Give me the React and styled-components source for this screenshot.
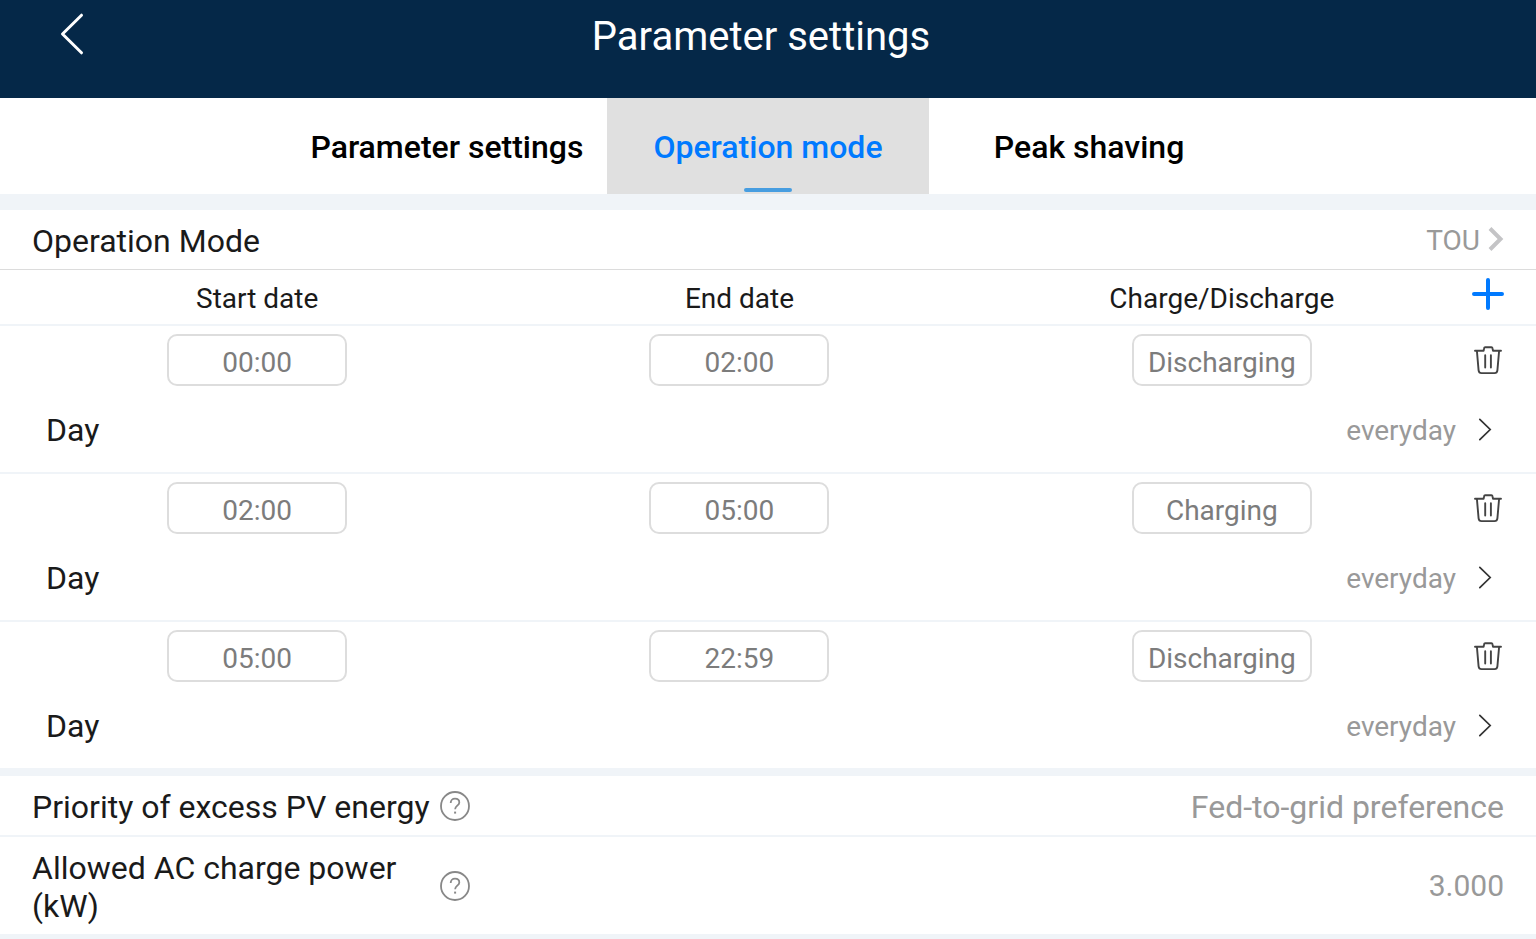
import React, { useState } from "react";
import styled, { createGlobalStyle } from "styled-components";

const TABS = ["Parameter settings", "Operation mode", "Peak shaving"];

const PERIODS = [
  { id: 1, start: "00:00", end: "02:00", mode: "Discharging", day: "everyday" },
  { id: 2, start: "02:00", end: "05:00", mode: "Charging", day: "everyday" },
  { id: 3, start: "05:00", end: "22:59", mode: "Discharging", day: "everyday" },
];

const BackIcon = () => (
  <svg width="32" height="44" viewBox="0 0 32 44" fill="none">
    <path
      d="M25.5 3.2L6.5 22l19 18.8"
      stroke="#fff"
      strokeWidth="3"
      strokeLinecap="round"
      strokeLinejoin="round"
    />
  </svg>
);

const PlusIcon = () => (
  <svg width="32" height="32" viewBox="0 0 32 32" fill="none">
    <path
      d="M16 2v28M2 16h28"
      stroke="#007aff"
      strokeWidth="4"
      strokeLinecap="round"
    />
  </svg>
);

const TrashIcon = () => (
  <svg width="32" height="32" viewBox="0 0 32 32" fill="none">
    <g
      stroke="#444"
      strokeWidth="1.9"
      strokeLinecap="round"
      strokeLinejoin="round"
    >
      <path d="M3 6.7h8.600l.5-2.500c.1-.7.5-1 1.100-1h6.200c.6 0 1 .3 1.100 1l.5 2.500H29" />
      <path d="M4.900 6.900l1.700 19.500c.2 1.800 1.200 2.700 2.900 2.700h13c1.700 0 2.700-.9 2.900-2.700l1.700-19.500" />
      <path d="M13.200 11.200v12.400M18.900 11.200v12.400" />
    </g>
  </svg>
);

const RowArrow = () => (
  <svg width="14" height="24" viewBox="0 0 14 24" fill="none">
    <path
      d="M1.8 1.300L12.200 11.500 1.800 21.700"
      stroke="#333"
      strokeWidth="1.7"
      strokeLinecap="round"
    />
  </svg>
);

const ValueArrow = () => (
  <svg width="16" height="24" viewBox="0 0 16 24" fill="none">
    <path d="M2 1.500L12.500 12 2 22.500" stroke="#c4c4c6" strokeWidth="4" />
  </svg>
);

const HelpIcon = () => (
  <svg width="30" height="30" viewBox="0 0 30 30" fill="none">
    <circle cx="15" cy="15" r="14" stroke="#888" strokeWidth="1.8" />
    <path
      d="M10.700 12c0-2.700 1.800-4.300 4.300-4.300s4.300 1.500 4.300 3.700c0 3.100-4.200 3.500-4.200 6.900"
      stroke="#888"
      strokeWidth="1.8"
    />
    <path d="M14.100 20.600h2v2h-2z" fill="#888" />
  </svg>
);

function Period({ item }) {
  return (
    <PeriodItem>
      <PeriodGrid>
        <TimeInput aria-label="Start date" defaultValue={item.start} />
        <TimeInput aria-label="End date" defaultValue={item.end} />
        <ModeSelect aria-label="Charge/Discharge" defaultValue={item.mode}>
          <option>Charging</option>
          <option>Discharging</option>
        </ModeSelect>
        <IconButton aria-label="Delete">
          <TrashIcon />
        </IconButton>
      </PeriodGrid>
      <DayRow>
        <Label>Day</Label>
        <DayButton>
          {item.day}
          <RowArrow />
        </DayButton>
      </DayRow>
    </PeriodItem>
  );
}

function App() {
  const [tab, setTab] = useState(TABS[1]);

  return (
    <>
      <GlobalStyle />
      <Header>
        <IconButton aria-label="Back">
          <BackIcon />
        </IconButton>
        <Title>Parameter settings</Title>
      </Header>
      <Nav>
        <TabList>
          {TABS.map((name) => (
            <Tab key={name} $active={name === tab} onClick={() => setTab(name)}>
              {name}
            </Tab>
          ))}
        </TabList>
      </Nav>
      <Section>
        <ModeRow>
          <Label>Operation Mode</Label>
          <ModeButton>
            TOU
            <ValueArrow />
          </ModeButton>
        </ModeRow>
        <HeadGrid>
          <span>Start date</span>
          <span>End date</span>
          <span>Charge/Discharge</span>
          <IconButton aria-label="Add">
            <PlusIcon />
          </IconButton>
        </HeadGrid>
        <PeriodList>
          {PERIODS.map((item) => (
            <Period key={item.id} item={item} />
          ))}
        </PeriodList>
      </Section>
      <Section>
        <SettingRow>
          <LabelGroup>
            <Label>Priority of excess PV energy</Label>
            <IconButton aria-label="Help">
              <HelpIcon />
            </IconButton>
          </LabelGroup>
          <ValueButton>Fed-to-grid preference</ValueButton>
        </SettingRow>
        <SettingRow>
          <LabelGroup>
            <Label as="label" htmlFor="power">
              Allowed AC charge power (kW)
            </Label>
            <IconButton aria-label="Help">
              <HelpIcon />
            </IconButton>
          </LabelGroup>
          <ValueInput id="power" defaultValue="3.000" />
        </SettingRow>
      </Section>
    </>
  );
}

export default App;

const GlobalStyle = createGlobalStyle`
  * {
    box-sizing: border-box;
  }

  body {
    margin: 0;
    background: #f0f4f8;
    color: #1a1a1a;
    font-family: Roboto, sans-serif;
    font-size: 28px;
  }

  button,
  input,
  select {
    margin: 0;
    padding: 0;
    border: 0;
    background: none;
    font: inherit;
    color: inherit;
  }

  svg {
    display: block;
    flex-shrink: 0;
  }
`;

const IconButton = styled.button`
  display: flex;
  align-items: center;
  justify-content: center;
  flex-shrink: 0;
  cursor: pointer;
`;

const Header = styled.header`
  display: grid;
  grid-template-columns: 32px 1fr 46px;
  align-items: start;
  padding: 12px 56px 36px;
  background: #052848;
`;

const Title = styled.h1`
  margin: 0;
  color: #fff;
  font-size: 40px;
  font-weight: 400;
  line-height: 50px;
  text-align: center;
`;

const Nav = styled.nav`
  display: flex;
  justify-content: center;
  background: #fff;
`;

const TabList = styled.div`
  display: grid;
  grid-template-columns: repeat(3, 1fr);
`;

const Tab = styled.button`
  position: relative;
  height: 96px;
  padding: 2px 24px 0;
  background: ${({ $active }) => ($active ? "#e0e0e0" : "#fff")};
  color: ${({ $active }) => ($active ? "#007aff" : "#000")};
  font-size: 32px;
  font-weight: 500;
  white-space: nowrap;
  cursor: pointer;

  &::after {
    content: "";
    display: ${({ $active }) => ($active ? "block" : "none")};
    position: absolute;
    bottom: 2px;
    left: calc(50% - 24px);
    width: 48px;
    height: 4px;
    border-radius: 2px;
    background: #479de0;
  }
`;

const Section = styled.section`
  background: #fff;

  ${Nav} + & {
    margin-top: 16px;
  }

  & + & {
    margin-top: 8px;
  }
`;

const Label = styled.span`
  font-size: 32px;
  line-height: 38px;
`;

const ModeRow = styled.div`
  display: flex;
  align-items: center;
  justify-content: space-between;
  height: 60px;
  padding: 2px 32px 0;
  border-bottom: 1px solid #dcdcdc;
`;

const ModeButton = styled.button`
  display: flex;
  align-items: center;
  gap: 8px;
  color: #999;
  cursor: pointer;

  svg {
    margin-bottom: 3px;
  }
`;

const Grid = styled.div`
  display: grid;
  grid-template-columns: repeat(3, 1fr) 41px;
  align-items: center;
  justify-items: center;
  padding: 0 32px 0 16px;

  ${IconButton} {
    justify-self: end;
  }
`;

const HeadGrid = styled(Grid)`
  height: 56px;
  padding-top: 2px;
  border-bottom: 2px solid #f0f4f8;

  ${IconButton} {
    margin-bottom: 8px;
  }
`;

const PeriodList = styled.ul`
  margin: 0;
  padding: 0;
  list-style: none;
`;

const PeriodItem = styled.li`
  & + & {
    border-top: 2px solid #f0f4f8;
  }
`;

const PeriodGrid = styled(Grid)`
  padding-top: 8px;
`;

const TimeInput = styled.input`
  width: 180px;
  height: 52px;
  padding-top: 4px;
  border: 2px solid #ddd;
  border-radius: 10px;
  color: #7c7c7c;
  text-align: center;
`;

const ModeSelect = styled.select`
  width: 180px;
  height: 52px;
  padding-top: 4px;
  border: 2px solid #ddd;
  border-radius: 10px;
  appearance: none;
  color: #7c7c7c;
  text-align: center;
  text-align-last: center;
`;

const DayRow = styled.div`
  display: flex;
  align-items: center;
  justify-content: space-between;
  height: 86px;
  padding: 2px 44px 0 46px;
`;

const DayButton = styled.button`
  display: flex;
  align-items: center;
  gap: 22px;
  color: #999;
  cursor: pointer;
`;

const SettingRow = styled.div`
  display: flex;
  align-items: center;
  justify-content: space-between;
  padding: 12px 32px 9px;

  & + & {
    border-top: 2px solid #f0f4f8;
  }
`;

const LabelGroup = styled.div`
  display: flex;
  align-items: center;
  gap: 8px;

  ${Label} {
    width: 400px;
  }

  ${IconButton} {
    margin-bottom: 3px;
  }
`;

const ValueButton = styled.button`
  color: #999;
  font-size: 32px;
  line-height: 38px;
  cursor: pointer;
`;

const ValueInput = styled.input`
  width: 180px;
  padding-bottom: 4px;
  color: #999;
  font-size: 30px;
  text-align: right;
`;
